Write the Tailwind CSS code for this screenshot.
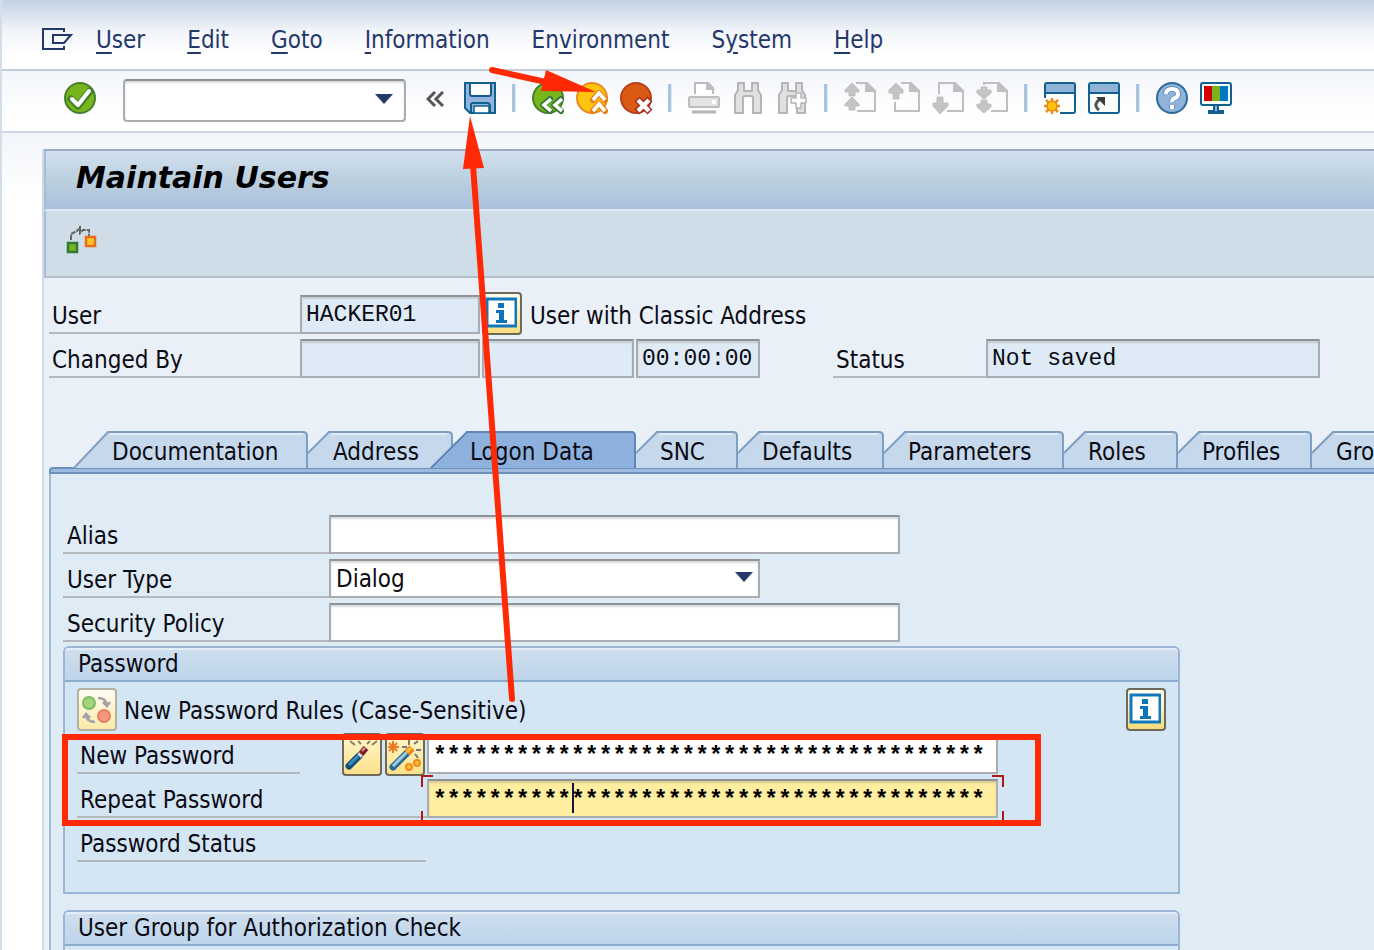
<!DOCTYPE html>
<html lang="en">
<head>
<meta charset="utf-8">
<title>Maintain Users</title>
<script src="https://cdn.jsdelivr.net/npm/@tailwindcss/browser@4"></script>
</head>
<body class="relative flex h-screen flex-col overflow-hidden border-l-2 border-[#d3deeb] bg-white font-['DejaVu_Sans_Condensed','DejaVu_Sans',sans-serif] text-[24px] leading-[28px] text-[#0b0b14]">

<nav aria-label="Menu" class="flex h-[71px] shrink-0 items-center gap-[42px] border-b-2 border-[#c3ccda] bg-linear-to-b from-[#c4d2e5] via-[#f1f4f9] via-45% to-white to-80% pt-[10px] pl-10 text-[#24386b]">
  <button aria-label="System menu" class="-mr-[22px] h-[24px] w-[34px]"><svg viewBox="0 0 34 24" class="block h-[24px] w-[34px]" fill="none" stroke="#24386b" stroke-width="2"><path d="M22 4V1H1v20h21v-3"/><path d="M11 7h18l-7 8H11z"/></svg></button>
  <button><u class="decoration-2 underline-offset-4">U</u>ser</button>
  <button><u class="decoration-2 underline-offset-4">E</u>dit</button>
  <button><u class="decoration-2 underline-offset-4">G</u>oto</button>
  <button><u class="decoration-2 underline-offset-4">I</u>nformation</button>
  <button>En<u class="decoration-2 underline-offset-4">v</u>ironment</button>
  <button>S<u class="decoration-2 underline-offset-4">y</u>stem</button>
  <button><u class="decoration-2 underline-offset-4">H</u>elp</button>
</nav>

<div role="toolbar" aria-label="Standard toolbar" class="flex h-[62px] shrink-0 items-start border-b-2 border-[#ced6e1] bg-linear-to-b from-[#f2f5fa] to-white to-70% pt-2 pl-[62px]">
  <button aria-label="Enter" class="mt-[3px] size-8"><svg viewBox="0 0 32 32" class="block size-8"><circle cx="16" cy="16" r="15" fill="#76b51b" stroke="#46802f" stroke-width="2"/><path d="M7 17l7 7L26 9" fill="none" stroke="#46802f" stroke-width="7" stroke-linecap="round" stroke-linejoin="round"/><path d="M8 17l6 6L25 9" fill="none" stroke="#fff" stroke-width="4" stroke-linecap="round" stroke-linejoin="round"/></svg></button>
  <div class="relative ml-[27px] h-[43px] w-[283px]">
    <input aria-label="Command" class="h-full w-full rounded border-2 border-[#a9acb0] border-t-[#8b8e92] bg-white px-2 shadow-[inset_0_2px_2px_#d9dbde] outline-none">
    <svg viewBox="0 0 18 10" class="pointer-events-none absolute top-[15px] right-[13px] h-[10px] w-[18px]"><path d="M0 0h18L9 10z" fill="#24386b"/></svg>
  </div>
  <button aria-label="Collapse" class="mt-[12px] ml-[20px] h-[16px] w-[18px]"><svg viewBox="0 0 18 16" class="block h-[16px] w-[18px]" fill="none" stroke="#555" stroke-width="3"><path d="M9 1L2 8l7 7M17 1l-7 7 7 7"/></svg></button>
  <div class="ml-[20px] flex items-start gap-3 pt-[3px]">
    <button aria-label="Save"><svg viewBox="0 0 32 32" class="block size-8"><path d="M1 1h30v30H6l-5-5z" fill="#93b4dc" stroke="#11608f" stroke-width="2"/><path d="M6 1h21v11q0 2-2 2H8q-2 0-2-2z" fill="#fff" stroke="#11608f" stroke-width="2"/><path d="M7 31v-8q0-2 2-2h14q3 0 3 3v7z" fill="#93b4dc" stroke="#11608f" stroke-width="2"/><path d="M10 31v-7h15v7z" fill="#fff" stroke="#11608f" stroke-width="1.5"/></svg></button>
    <span class="mx-1 mt-[2px] h-7 w-1 border-r border-[#dbe6f2] bg-[#a9c4e0]"></span>
    <button aria-label="Back"><svg viewBox="0 0 32 32" class="block size-8 overflow-visible"><circle cx="16" cy="16" r="15" fill="#76b51b" stroke="#46802f" stroke-width="2"/><g fill="none"><path d="M18 17l-7 6 7 6M29 17l-7 6 7 6" stroke="#387a3a" stroke-width="6" stroke-linecap="round" stroke-linejoin="round"/><path d="M19 17l-7 6 7 6M30 17l-7 6 7 6" stroke="#fff" stroke-width="3.5"/></g></svg></button>
    <button aria-label="Exit"><svg viewBox="0 0 32 32" class="block size-8 overflow-visible"><circle cx="16" cy="16" r="15" fill="#ffc40f" stroke="#e78a24" stroke-width="2"/><g fill="none"><path d="M17 18l6-7 6 7M17 29l6-7 6 7" stroke="#e8801a" stroke-width="6" stroke-linecap="round" stroke-linejoin="round"/><path d="M17 18l6-7 6 7M17 29l6-7 6 7" stroke="#fff" stroke-width="3.5"/></g></svg></button>
    <button aria-label="Cancel"><svg viewBox="0 0 32 32" class="block size-8 overflow-visible"><circle cx="16" cy="16" r="15" fill="#db5a13" stroke="#b6401c" stroke-width="2"/><g fill="none"><path d="M17 17l13 13M30 17L17 30" stroke="#a5261a" stroke-width="7"/><path d="M18 18l11 11M29 18L18 29" stroke="#fff" stroke-width="4.5"/></g></svg></button>
    <span class="mx-1 mt-[2px] h-7 w-1 border-r border-[#dbe6f2] bg-[#a9c4e0]"></span>
    <button aria-label="Print" disabled><svg viewBox="0 0 32 32" class="block size-8" stroke="#bdbdbd" stroke-width="2"><path d="M7 12V1h13l5 5v6" fill="#fff"/><path d="M19 1v6h6z" fill="#bdbdbd"/><rect x="1" y="15" width="30" height="10" rx="1" fill="#e3e3e3"/><path d="M24 20h4" stroke="#fff" stroke-width="4"/><path d="M4 30h24" stroke="#b5b5b5" stroke-width="3"/></svg></button>
    <button aria-label="Find" disabled><svg viewBox="0 0 32 32" class="block size-8" fill="#e0e0e0" stroke="#b5b5b5" stroke-width="2" stroke-linejoin="round"><path d="M6 1h6v8h8V1h6v7l3 5v18h-8V17q0-3-2-3h-6q-2 0-2 3v14H3V13l3-5z"/></svg></button>
    <button aria-label="Find next" disabled><svg viewBox="0 0 32 32" class="block size-8" fill="#e0e0e0" stroke="#b5b5b5" stroke-width="2" stroke-linejoin="round"><path d="M6 1h6v8h8V1h6v7l3 5v18h-8V17q0-3-2-3h-6q-2 0-2 3v14H3V13l3-5z"/><path d="M20 11h5v5h5v5h-5v5h-5v-5h-5v-5h5z" fill="#fff" stroke-width="1.5"/></svg></button>
    <span class="mx-1 mt-[2px] h-7 w-1 border-r border-[#dbe6f2] bg-[#a9c4e0]"></span>
    <button aria-label="First page" disabled><svg viewBox="0 0 32 32" class="block size-8" stroke="#bfbfbf" stroke-width="2"><path d="M12 1h11l8 8v20H13" fill="none"/><path d="M22 1v8h9z" fill="#bfbfbf"/><path d="M8 1l7 7v2h-4v4H5v-4H1V8zM8 15l7 7v2h-4v4H5v-4H1v-2z" fill="#c4c4c4" stroke-width="1"/></svg></button>
    <button aria-label="Previous page" disabled><svg viewBox="0 0 32 32" class="block size-8" stroke="#bfbfbf" stroke-width="2"><path d="M13 1h10l8 8v20H7V20" fill="none"/><path d="M22 1v8h9z" fill="#bfbfbf"/><path d="M8 1l7 7v3h-4v6H5v-6H1V8z" fill="#c4c4c4" stroke-width="1"/></svg></button>
    <button aria-label="Next page" disabled><svg viewBox="0 0 32 32" class="block size-8" stroke="#bfbfbf" stroke-width="2"><path d="M7 12V1h16l8 8v20H15" fill="none"/><path d="M22 1v8h9z" fill="#bfbfbf"/><path d="M5 15h6v6h5v3l-8 8-7-8v-3h4z" fill="#c4c4c4" stroke-width="1"/></svg></button>
    <button aria-label="Last page" disabled><svg viewBox="0 0 32 32" class="block size-8" stroke="#bfbfbf" stroke-width="2"><path d="M8 3V1h15l8 8v20H15" fill="none"/><path d="M22 1v8h9z" fill="#bfbfbf"/><path d="M5 5h6v3h4v3l-7 6-7-6V8h4zM5 18h6v4h4v3l-7 6-7-6v-3h4z" fill="#c4c4c4" stroke-width="1"/></svg></button>
    <span class="mx-1 mt-[2px] h-7 w-1 border-r border-[#dbe6f2] bg-[#a9c4e0]"></span>
    <button aria-label="New session"><svg viewBox="0 0 32 32" class="block size-8"><path d="M1 16V3q0-2 2-2h26q2 0 2 2v26q0 2-2 2H16" fill="#fff" stroke="#11608f" stroke-width="2"/><path d="M2 2h28v9H2z" fill="#8fb3d6"/><path d="M1 11h30" stroke="#11608f" stroke-width="2"/><rect y="16" width="16" height="16" fill="#fff"/><g stroke="#f08a10"><path d="M8 16v16M0 24h16M2 18l12 12M14 18L2 30" stroke-width="2.5"/><circle cx="8" cy="24" r="5" fill="#ffc40f" stroke-width="1.5"/></g></svg></button>
    <button aria-label="Create shortcut"><svg viewBox="0 0 32 32" class="block size-8"><rect x="1" y="1" width="30" height="30" rx="2" fill="#fff" stroke="#11608f" stroke-width="2"/><path d="M2 2h28v9H2z" fill="#8fb3d6"/><path d="M1 11h30" stroke="#11608f" stroke-width="2"/><path d="M11 28q-5-4-2-8 1-2 4-3" fill="none" stroke="#555" stroke-width="3"/><path d="M8 15h9v9l-3-3-2-2z" fill="#3c3c3c"/></svg></button>
    <span class="mx-1 mt-[2px] h-7 w-1 border-r border-[#dbe6f2] bg-[#a9c4e0]"></span>
    <button aria-label="Help"><svg viewBox="0 0 32 32" class="block size-8"><circle cx="16" cy="16" r="15" fill="#8fb3d9" stroke="#2c6a9c" stroke-width="2"/><g fill="none"><path d="M10 12q0-5 6-5 6 0 6 5 0 3-3 4-3 1-3 4M16 23v4" stroke="#4f86b4" stroke-width="5.5"/><path d="M10 12q0-5 6-5 6 0 6 5 0 3-3 4-3 1-3 4M16 23v4" stroke="#fff" stroke-width="4"/></g></svg></button>
    <button aria-label="Customize layout"><svg viewBox="0 0 32 32" class="block size-8"><rect x="1" y="1" width="30" height="22" rx="2" fill="#fff" stroke="#11608f" stroke-width="2"/><path d="M4 4h8v15H4z" fill="#d20000"/><path d="M12 4h8v15h-8z" fill="#7ab51d"/><path d="M20 4h8v15h-8z" fill="#0078c1"/><path d="M13 24h6v4h5v4H8v-4h5z" fill="#11608f"/><path d="M15 24h2v5h-2z" fill="#8fb3d6"/></svg></button>
  </div>
</div>

<div class="flex min-h-0 grow bg-linear-to-b from-[#f2f5fa] to-white to-8% pt-[16px] pl-10">
<main class="flex min-w-0 grow flex-col overflow-hidden border-l-2 border-[#cfdae8] bg-[#e9f0f7]">
  <header class="flex h-[62px] shrink-0 items-center border-t-2 border-b-2 border-l-2 border-t-[#9aa9bf] border-b-[#dcebf7] border-l-[#aabbd2] bg-linear-to-b from-[#d2e1ef] via-[#bbcfdf] to-[#abc1dc] pb-[4px] pl-[30px]">
    <h1 class="font-['DejaVu_Sans',sans-serif] text-[30px] leading-[36px] font-bold text-black italic">Maintain Users</h1>
  </header>
  <div role="toolbar" aria-label="Application toolbar" class="flex h-[67px] shrink-0 items-start border-b-2 border-l-2 border-b-[#b3bec9] border-l-[#aabbd2] bg-[#cedde8] pt-[13px] pl-[20px]">
    <button aria-label="Display relationships"><svg viewBox="0 0 32 32" class="block size-8"><path d="M5 16v-6l6-3 3-3v5l3-3h6v6M14 2v5" fill="none" stroke="#666" stroke-width="2" stroke-dasharray="5 1"/><rect x="2" y="19" width="9" height="9" fill="#76b51b" stroke="#337a35" stroke-width="2.5"/><rect x="20" y="13" width="9" height="9" fill="#ffc828" stroke="#ea6a1e" stroke-width="2.5"/></svg></button>
  </div>

  <section aria-label="User header" class="flex shrink-0 flex-col gap-[5px] pt-[17px] pl-[5px]">
    <div class="flex h-[39px]">
      <label for="user" class="h-[39px] w-[251px] border-b-2 border-[#b5b8bc] pt-[7px] pl-[3px]">User</label>
      <input id="user" readonly value="HACKER01" class="w-[180px] border-2 border-[#a9adb1] border-t-[#8f9397] bg-[#deebf6] px-1 font-['Liberation_Mono',monospace] text-[23px] shadow-[inset_0_2px_2px_#c4ccd4] outline-none">
      <button aria-label="User information" class="-mt-[3px] ml-[2px] h-[43px] w-10 rounded border-2 border-[#6d6a5c] bg-linear-to-b from-[#fffdf0] to-[#f8dc7c] pl-px"><svg viewBox="0 0 32 36" class="block h-9 w-8"><rect x="2" y="3" width="29" height="27" fill="#fff" stroke="#1377bd" stroke-width="3"/><path d="M13 7h6v5h-6zM11 14h8v10h3v3H11v-3h3v-7h-3z" fill="#0d74bb"/></svg></button>
      <span class="pt-[7px] pl-2">User with Classic Address</span>
    </div>
    <div class="flex h-[39px]">
      <label for="changed" class="h-[39px] w-[251px] border-b-2 border-[#b5b8bc] pt-[7px] pl-[3px]">Changed By</label>
      <input id="changed" readonly class="w-[180px] border-2 border-[#a9adb1] border-t-[#8f9397] bg-[#deebf6] px-1 shadow-[inset_0_2px_2px_#c4ccd4] outline-none">
      <input aria-label="Changed on" readonly class="ml-[2px] w-[152px] border-2 border-[#a9adb1] border-t-[#8f9397] bg-[#deebf6] px-1 shadow-[inset_0_2px_2px_#c4ccd4] outline-none">
      <input aria-label="Changed at" readonly value="00:00:00" class="ml-[2px] w-[124px] border-2 border-[#a9adb1] border-t-[#8f9397] bg-[#deebf6] px-1 font-['Liberation_Mono',monospace] text-[23px] shadow-[inset_0_2px_2px_#c4ccd4] outline-none">
      <label for="status" class="ml-[73px] h-[39px] w-[153px] border-b-2 border-[#b5b8bc] pt-[7px] pl-[3px]">Status</label>
      <input id="status" readonly value="Not saved" class="w-[334px] border-2 border-[#a9adb1] border-t-[#8f9397] bg-[#deebf6] px-1 font-['Liberation_Mono',monospace] text-[23px] shadow-[inset_0_2px_2px_#c4ccd4] outline-none">
    </div>
  </section>

  <div role="tablist" class="mt-[53px] flex h-[37px] shrink-0 pl-[29px] whitespace-nowrap">
    <button role="tab" class="relative w-[235px] shrink-0 pt-1 pl-[39px] text-left"><svg viewBox="0 0 235 37" class="absolute top-0 left-0 h-[37px] w-[235px]"><path d="M1 37L35 1h195q4 0 4 4v32" fill="#c6d9ec" stroke="#7f9fc2" stroke-width="2"/><path d="M37 3h193" stroke="#e2ecf6" stroke-width="2"/></svg><span class="relative">Documentation</span></button>
    <button role="tab" class="relative w-[145px] shrink-0 pt-1 pl-[25px] text-left"><svg viewBox="0 0 145 37" class="absolute top-0 left-0 h-[37px] w-[145px]"><path d="M0 37V22L21 1h119q4 0 4 4v32" fill="#c6d9ec"/><path d="M0 22L21 1h119q4 0 4 4v32" fill="none" stroke="#7f9fc2" stroke-width="2"/><path d="M23 3h116" stroke="#e2ecf6" stroke-width="2"/></svg><span class="relative">Address</span></button>
    <button role="tab" aria-selected="true" class="relative w-[183px] shrink-0 pt-1 pl-[17px] text-left"><svg viewBox="0 0 206 37" class="absolute top-0 right-0 h-[37px] w-[206px]"><path d="M1 37L37 1h164q4 0 4 4v32" fill="#8db1dc" stroke="#5f86b5" stroke-width="2"/></svg><span class="relative">Logon Data</span></button>
    <button role="tab" class="relative w-[102px] shrink-0 pt-1 pl-[24px] text-left"><svg viewBox="0 0 102 37" class="absolute top-0 left-0 h-[37px] w-[102px]"><path d="M0 37V22L21 1h76q4 0 4 4v32" fill="#c6d9ec"/><path d="M0 22L21 1h76q4 0 4 4v32" fill="none" stroke="#7f9fc2" stroke-width="2"/><path d="M23 3h73" stroke="#e2ecf6" stroke-width="2"/></svg><span class="relative">SNC</span></button>
    <button role="tab" class="relative w-[146px] shrink-0 pt-1 pl-[24px] text-left"><svg viewBox="0 0 146 37" class="absolute top-0 left-0 h-[37px] w-[146px]"><path d="M0 37V22L21 1h120q4 0 4 4v32" fill="#c6d9ec"/><path d="M0 22L21 1h120q4 0 4 4v32" fill="none" stroke="#7f9fc2" stroke-width="2"/><path d="M23 3h117" stroke="#e2ecf6" stroke-width="2"/></svg><span class="relative">Defaults</span></button>
    <button role="tab" class="relative w-[180px] shrink-0 pt-1 pl-[24px] text-left"><svg viewBox="0 0 180 37" class="absolute top-0 left-0 h-[37px] w-[180px]"><path d="M0 37V22L21 1h154q4 0 4 4v32" fill="#c6d9ec"/><path d="M0 22L21 1h154q4 0 4 4v32" fill="none" stroke="#7f9fc2" stroke-width="2"/><path d="M23 3h151" stroke="#e2ecf6" stroke-width="2"/></svg><span class="relative">Parameters</span></button>
    <button role="tab" class="relative w-[114px] shrink-0 pt-1 pl-[24px] text-left"><svg viewBox="0 0 114 37" class="absolute top-0 left-0 h-[37px] w-[114px]"><path d="M0 37V22L21 1h88q4 0 4 4v32" fill="#c6d9ec"/><path d="M0 22L21 1h88q4 0 4 4v32" fill="none" stroke="#7f9fc2" stroke-width="2"/><path d="M23 3h85" stroke="#e2ecf6" stroke-width="2"/></svg><span class="relative">Roles</span></button>
    <button role="tab" class="relative w-[134px] shrink-0 pt-1 pl-[24px] text-left"><svg viewBox="0 0 134 37" class="absolute top-0 left-0 h-[37px] w-[134px]"><path d="M0 37V22L21 1h108q4 0 4 4v32" fill="#c6d9ec"/><path d="M0 22L21 1h108q4 0 4 4v32" fill="none" stroke="#7f9fc2" stroke-width="2"/><path d="M23 3h105" stroke="#e2ecf6" stroke-width="2"/></svg><span class="relative">Profiles</span></button>
    <button role="tab" class="relative w-[134px] shrink-0 pt-1 pl-[24px] text-left"><svg viewBox="0 0 134 37" class="absolute top-0 left-0 h-[37px] w-[134px]"><path d="M0 37V22L21 1h108q4 0 4 4v32" fill="#c6d9ec"/><path d="M0 22L21 1h108q4 0 4 4v32" fill="none" stroke="#7f9fc2" stroke-width="2"/><path d="M23 3h105" stroke="#e2ecf6" stroke-width="2"/></svg><span class="relative">Groups</span></button>
  </div>
  <div class="-mt-px ml-[5px] h-[7px] shrink-0 rounded-tl border-y-2 border-l-2 border-[#6a90be] bg-[#9dbbdf]"></div>

  <section role="tabpanel" aria-label="Logon Data" class="ml-[5px] flex grow flex-col border-l-2 border-[#9fbbd9] bg-[#dfebf5] pt-[41px] pl-3">
    <div class="flex shrink-0 flex-col gap-[5px]">
      <div class="flex h-[39px]">
        <label for="alias" class="h-[39px] w-[266px] border-b-2 border-[#b5b8bc] pt-[7px] pl-1">Alias</label>
        <input id="alias" class="w-[571px] border-2 border-[#a9adb1] border-t-[#8f9397] bg-white px-1 shadow-[inset_0_2px_2px_#d9dbde] outline-none">
      </div>
      <div class="flex h-[39px]">
        <label for="type" class="h-[39px] w-[266px] border-b-2 border-[#b5b8bc] pt-[7px] pl-1">User Type</label>
        <div class="relative w-[431px]">
          <select id="type" class="h-full w-full appearance-none border-2 border-[#a9adb1] border-t-[#8f9397] bg-white px-[5px] shadow-[inset_0_2px_2px_#d9dbde] outline-none"><option>Dialog</option></select>
          <svg viewBox="0 0 18 10" class="pointer-events-none absolute top-[13px] right-[7px] h-[10px] w-[18px]"><path d="M0 0h18L9 10z" fill="#24386b"/></svg>
        </div>
      </div>
      <div class="flex h-[39px]">
        <label for="policy" class="h-[39px] w-[266px] border-b-2 border-[#b5b8bc] pt-[7px] pl-1">Security Policy</label>
        <input id="policy" class="w-[571px] border-2 border-[#a9adb1] border-t-[#8f9397] bg-white px-1 shadow-[inset_0_2px_2px_#d9dbde] outline-none">
      </div>
    </div>

    <section aria-labelledby="pw-title" class="mt-1 flex h-[248px] w-[1117px] shrink-0 flex-col rounded-t-md border-2 border-[#9bb6d4] bg-[#d4e5f4]">
      <h2 id="pw-title" class="h-[34px] shrink-0 rounded-t border-t-2 border-b-2 border-t-[#e4eef7] border-b-[#8eaccb] bg-linear-to-b from-[#cedfee] to-[#bdd4ea] pl-[13px]">Password</h2>
      <div class="flex flex-col pt-[6px] pl-3">
        <div class="flex h-[44px]">
          <button aria-label="Change password rules" class="h-[43px] w-10 rounded border-2 border-[#b3b19f] bg-linear-to-b from-[#fffdf0] to-[#fbe9a8]"><svg viewBox="0 0 36 38" class="block h-[38px] w-9"><circle cx="10" cy="12" r="6" fill="#a4d57b" stroke="#7fba6a" stroke-width="2"/><circle cx="25" cy="25" r="6" fill="#f3977a" stroke="#e28263" stroke-width="2"/><path d="M19 7q8 0 9 7M24 11l4 4 3-4M16 31q-8 0-9-7M4 27l3-4 4 4" fill="none" stroke="#a2a2a8" stroke-width="2.5"/></svg></button>
          <span class="pt-[9px] pl-[7px]">New Password Rules (Case-Sensitive)</span>
          <button aria-label="Password rules information" class="mr-3 ml-auto h-[43px] w-10 rounded border-2 border-[#6d6a5c] bg-linear-to-b from-[#fffdf0] to-[#f8dc7c] pl-px"><svg viewBox="0 0 32 36" class="block h-9 w-8"><rect x="2" y="3" width="29" height="27" fill="#fff" stroke="#1377bd" stroke-width="3"/><path d="M13 7h6v5h-6zM11 14h8v10h3v3H11v-3h3v-7h-3z" fill="#0d74bb"/></svg></button>
        </div>
        <div class="flex h-[44px] pt-[3px]">
          <label for="new" class="h-[39px] w-[223px] border-b-2 border-[#b5b8bc] pt-[7px] pl-[3px]">New Password</label>
          <button aria-label="Deactivate password" class="-mt-[2px] ml-[42px] h-[43px] w-10 rounded border-2 border-[#6d6a5c] bg-linear-to-b from-[#fff6c8] to-[#fbe18a]"><svg viewBox="0 0 36 38" class="block h-[38px] w-9" fill="none"><path d="M6 5l5 4M14 5l3 3M23 8l3-3M28 9l5-4" stroke="#8a8266" stroke-width="2"/><path d="M5 30L15 20" stroke="#174f78" stroke-width="7" stroke-linecap="round"/><path d="M5 29L14 20" stroke="#3d8cc4" stroke-width="3"/><path d="M15 20l5-5" stroke="#ddd" stroke-width="5"/><path d="M17 18l5-6" stroke="#7b2030" stroke-width="6"/><path d="M18 15l3-3" stroke="#d99" stroke-width="2"/></svg></button>
          <button aria-label="Generate password" class="-mt-[2px] ml-[3px] h-[43px] w-10 rounded border-2 border-[#6d6a5c] bg-linear-to-b from-[#fff6c8] to-[#fbe18a]"><svg viewBox="0 0 36 38" class="block h-[38px] w-9" fill="none"><path d="M6 5v12M1 11h11M2 7l8 8M10 7l-8 8" stroke="#ea7a28" stroke-width="2"/><path d="M15 11h5M22 4v5M27 8l4-3M29 14h5M28 18l3 4" stroke="#777" stroke-width="2"/><path d="M6 31L20 17" stroke="#2b6c94" stroke-width="7" stroke-linecap="round"/><path d="M6 30L20 16" stroke="#a5cbe0" stroke-width="3"/><path d="M20 17l5-5" stroke="#ef7d1a" stroke-width="7"/><path d="M20 16l4-4" stroke="#ffc828" stroke-width="3"/><circle cx="22" cy="31" r="3" fill="#ffc828" stroke="#ee8a1e" stroke-width="2"/><circle cx="30" cy="27" r="3" fill="#ffc828" stroke="#ee8a1e" stroke-width="2"/></svg></button>
          <input id="new" value="****************************************" class="ml-[2px] h-[39px] w-[571px] border-2 border-[#a9adb1] border-t-[#8f9397] bg-white px-1 pt-[4px] font-['Liberation_Mono',monospace] text-[23px] font-bold text-black outline-none">
        </div>
        <div class="flex h-[44px] pt-[3px]">
          <label for="repeat" class="h-[39px] w-[350px] border-b-2 border-[#b5b8bc] pt-[7px] pl-[3px]">Repeat Password</label>
          <div class="relative h-[39px] w-[571px]">
            <input id="repeat" value="****************************************" class="h-full w-full border-2 border-[#a9adb1] border-t-[#8f9397] bg-[#ffee9f] px-1 pt-[4px] font-['Liberation_Mono',monospace] text-[23px] font-bold text-black shadow-[inset_0_2px_2px_#d9cb90] outline-none">
            <span class="absolute top-1 left-[145px] h-[30px] w-[2px] bg-[#14143c]"></span>
            <svg viewBox="0 0 583 46" class="pointer-events-none absolute -top-1 -left-[6px] h-[46px] w-[583px]" fill="none" stroke="#b01818" stroke-width="2"><path d="M1 12V1h11M571 1h11v11M1 36v10M582 36v10"/></svg>
          </div>
        </div>
        <div class="flex h-[44px] pt-[3px]">
          <span class="h-[39px] w-[349px] border-b-2 border-[#b5b8bc] pt-[7px] pl-[3px]">Password Status</span>
        </div>
      </div>
    </section>

    <section aria-labelledby="group-title" class="mt-4 flex h-[120px] w-[1117px] shrink-0 flex-col rounded-t-md border-2 border-[#9bb6d4] bg-[#d4e5f4]">
      <h2 id="group-title" class="h-[34px] shrink-0 rounded-t border-t-2 border-b-2 border-t-[#e4eef7] border-b-[#8eaccb] bg-linear-to-b from-[#cedfee] to-[#bdd4ea] pl-[13px]">User Group for Authorization Check</h2>
    </section>
  </section>
</main>
</div>

<!-- Red call-out box and arrows drawn over the form -->
<svg viewBox="0 0 1374 950" aria-hidden="true" class="pointer-events-none absolute top-0 -left-[2px] h-[950px] w-[1374px]" fill="none" stroke="#ff2a05">
  <rect x="65" y="737" width="973" height="86" stroke-width="6"/>
  <path d="M492 70L546 82M473 165L512 699" stroke-width="6" stroke-linecap="round"/>
  <path d="M546 70L596 92L541 91zM470 116L484 168L463 169z" fill="#ff2a05" stroke="none"/>
</svg>
</body>
</html>
